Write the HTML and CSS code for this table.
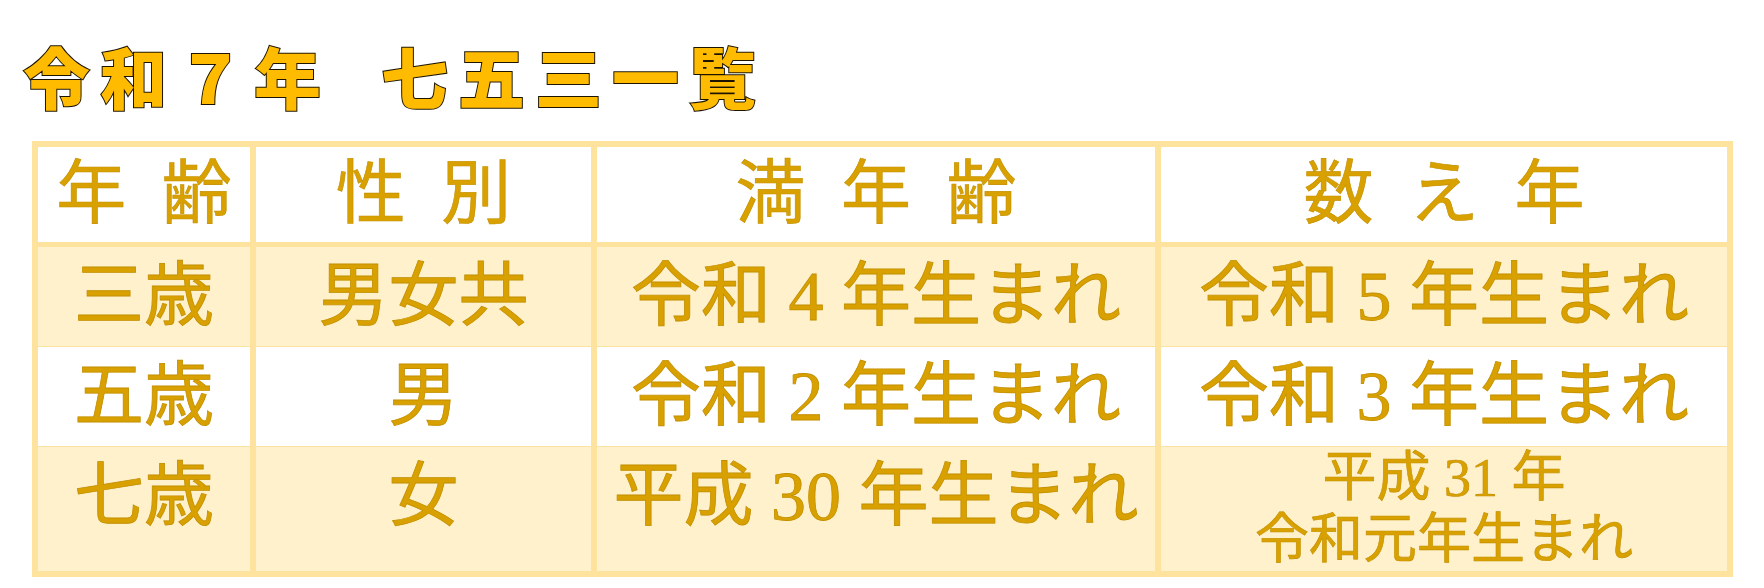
FILE: index.html
```
<!DOCTYPE html>
<html lang="ja">
<head>
<meta charset="utf-8">
<title>令和７年 七五三一覧</title>
<link rel="stylesheet" href="styles.css">
</head>
<body>
<main class="page">
  <h1 class="title"><span class="title-part">令和７年</span><span class="title-part">七五三一覧</span></h1>
  <table class="chart">
    <thead>
      <tr>
        <th class="c1">年 齢</th>
        <th class="c2">性 別</th>
        <th class="c3">満 年 齢</th>
        <th class="c4">数 え 年</th>
      </tr>
    </thead>
    <tbody>
      <tr class="alt">
        <td>三歳</td>
        <td>男女共</td>
        <td>令和 4 年生まれ</td>
        <td>令和 5 年生まれ</td>
      </tr>
      <tr class="plain">
        <td>五歳</td>
        <td>男</td>
        <td>令和 2 年生まれ</td>
        <td>令和 3 年生まれ</td>
      </tr>
      <tr class="alt last">
        <td>七歳</td>
        <td>女</td>
        <td>平成 30 年生まれ</td>
        <td class="small">平成 31 年<br>令和元年生まれ</td>
      </tr>
    </tbody>
  </table>
</main>
</body>
</html>
```
FILE: styles.css
```
html, body {
  margin: 0;
  padding: 0;
  background: #ffffff;
}

.page {
  padding: 35px 0 0 32px;
}

.title {
  margin: 0 0 26px -9px;
  height: 80px;
  display: flex;
  gap: 50px;
  font-family: "Noto Sans CJK JP", "Noto Sans", sans-serif;
  font-weight: 900;
  font-size: 67px;
  line-height: 80px;
  letter-spacing: 10px;
  color: #ffbb00;
  -webkit-text-stroke: 2px #1c1400;
  paint-order: stroke fill;
}

.chart {
  width: 1701px;
  table-layout: fixed;
  border-collapse: separate;
  border-spacing: 0;
  border: 6px solid #fee39f;
  font-family: "Liberation Serif", "Noto Sans CJK JP", serif;
  color: #d9a100;
  -webkit-text-stroke: 0.6px #c38f00;
}

.chart th,
.chart td {
  box-sizing: border-box;
  padding: 0;
  text-align: center;
  border-right: 6px solid #fee39f;
  white-space: nowrap;
}

.chart th:last-child,
.chart td:last-child {
  border-right: none;
}

.chart th {
  height: 100px;
  font-weight: normal;
  font-size: 70px;
  line-height: 95px;
  word-spacing: 18px;
  vertical-align: middle;
  background: #ffffff;
  border-bottom: 5px solid #fee39f;
}

.c1 { width: 218px; }
.c2 { width: 341px; }
.c3 { width: 564px; }
.c4 { width: 566px; }

.chart td {
  font-size: 70px;
  line-height: 99px;
  vertical-align: top;
  border-bottom: 1px solid #fbe2a0;
}

.chart tr.alt td {
  background: #fff1cc;
}

.chart tr.plain td {
  background: #ffffff;
}

.chart tr.last td {
  height: 124px;
  border-bottom: none;
}

.chart td.small {
  font-size: 54px;
  line-height: 62px;
}

.chart td:not(.small) {
  -webkit-text-stroke: 0.8px #c38f00;
}
```
